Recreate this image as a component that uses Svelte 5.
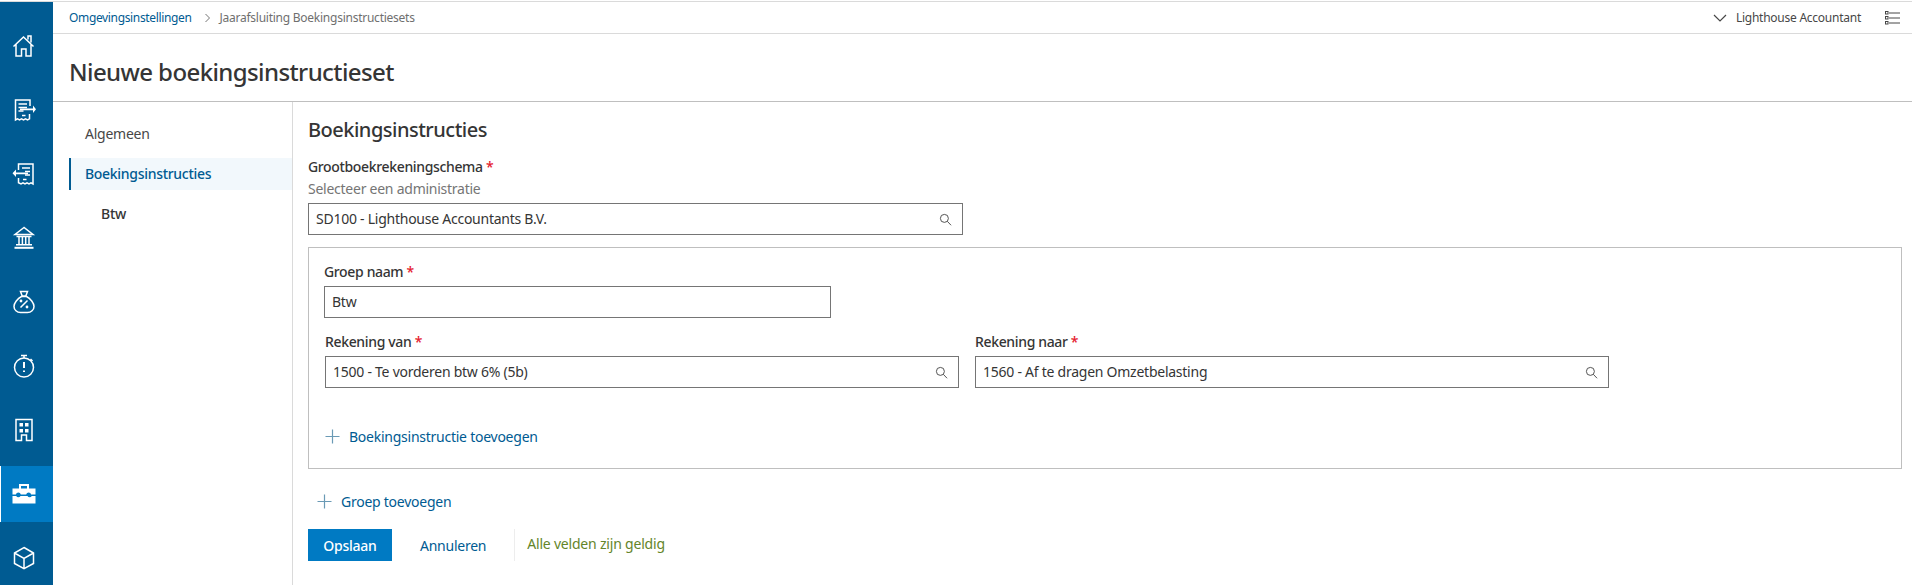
<script>
  const sideItems = [
    { id: 'home', active: false },
    { id: 'out', active: false },
    { id: 'in', active: false },
    { id: 'bank', active: false },
    { id: 'bag', active: false },
    { id: 'timer', active: false },
    { id: 'building', active: false },
    { id: 'case', active: true },
    { id: 'cube', active: false }
  ];
</script>

{#snippet searchIcon()}
  <svg class="search" viewBox="0 0 14 14" aria-hidden="true"><circle cx="5.8" cy="5.8" r="4.3" /><path d="M9 9l4 4.2" /></svg>
{/snippet}

{#snippet plusIcon()}
  <svg class="plus" viewBox="0 0 15 15" aria-hidden="true"><path d="M7.5 0.5v14M0.5 7.5h14" /></svg>
{/snippet}

{#snippet sideIcon(id)}
  <svg class="side-icon" viewBox="0 0 24 24" aria-hidden="true">
    {#if id === 'home'}
      <path d="M1.500 12.500L11.500 3l10 9.500M4 10.500V22h5.500v-7h4.500v7H19V10.500M16 5.500V2h3v6.500" />
    {:else if id === 'out'}
      <path d="M18 8V2H3.500v20l2-1.200 2 1.200 2-1.200 2 1.200 2-1.200 2 1.200 2-1.200V16M6.500 6h8.500M6.500 9.500h8.500M6.500 13h5M10 17.500h3.500" />
      <path class="fill" d="M8 10.500h13V7.500l3 3.800-3 3.700v-2.700H8z" />
    {:else if id === 'in'}
      <path d="M6.500 8V2H21v20l-2-1.200-2 1.200-2-1.200-2 1.200-2-1.200-2 1.200-2.500-1.200V16M10 6h8M13 9.500h5M13 13h5M11 17.500h3.500" />
      <path class="fill" d="M16 10.500H4V7.500L0.500 11.300 4 15v-2.700h12z" />
    {:else if id === 'bank'}
      <path d="M12 1.500L3 8.500h18zM4.500 10.500h15M7 11v7.500M10.400 11v7.500M13.700 11v7.500M17 11v7.500M4 18.700h16" />
      <path class="thick" d="M2.500 21.800h19" />
    {:else if id === 'bag'}
      <path d="M8.500 1.500h7l-1.700 4.500h-3.600zM9.500 6.500h5c4 2 7.500 6.500 7.500 10 0 3.500-3 6-6.500 6h-7c-3.500 0-6.500-2.500-6.500-6 0-3.500 3.500-8 7.500-10zM8.500 17.500l7-7" />
      <circle class="fill" cx="9" cy="11" r="1.400" /><circle class="fill" cx="15" cy="17" r="1.400" />
    {:else if id === 'timer'}
      <circle cx="12" cy="13.500" r="9.500" /><path d="M9 1.500h6M12 2v2M18.500 5l2 2" />
      <path class="thick" d="M12 8v6M12 16.500v1.500" />
    {:else if id === 'building'}
      <path d="M4 1.500h16v21h-5.500V17h-5v5.500H4z" />
      <path class="fill" d="M7.500 5h3.500v3.500H7.500zM13 5h3.500v3.500H13zM7.500 11h3.500v3.500H7.500zM13 11h3.500v3.500H13z" />
    {:else if id === 'case'}
      <path class="thick" d="M8 7V3h8v4" />
      <path class="fill" d="M0.500 6.500h23v6h-4.400a2.500 2.500 0 0 0-4.900 0H8.800a2.500 2.500 0 0 0-4.900 0H0.500zM0.500 14h3.700a2.400 2.400 0 0 0 4.300 0h7a2.400 2.400 0 0 0 4.300 0h3.700v7.500H0.500z" />
    {:else}
      <path d="M12 1.500l9.500 5.500v10.500L12 22.700l-9.500-5.200V7zM2.500 7l9.500 5.500L21.500 7M12 12.500v10.200" />
    {/if}
  </svg>
{/snippet}

<div class="app">
  <nav class="sidebar">
    {#each sideItems as item}
      <div class="side-item" class:active={item.active}>{@render sideIcon(item.id)}</div>
    {/each}
  </nav>

  <div class="main">
    <header class="topbar">
      <div class="crumbs">
        <span class="crumb-link">Omgevingsinstellingen</span>
        <svg class="crumb-sep" viewBox="0 0 8 10" aria-hidden="true"><path d="M1.500 1l4 4-4 4" /></svg>
        <span class="crumb-current">Jaarafsluiting Boekingsinstructiesets</span>
      </div>
      <div class="user">
        <svg class="chevron" viewBox="0 0 14 8" aria-hidden="true"><path d="M1 1l6 6 6-6" /></svg>
        <span class="user-name">Lighthouse Accountant</span>
        <svg class="list-icon" viewBox="0 0 15 14" aria-hidden="true">
          <path class="list-lines" d="M4 2h11M4 7h11M4 12h11" />
          <rect x="0.500" y="0.500" width="2.500" height="2.500" /><rect x="0.500" y="5.500" width="2.500" height="2.500" /><rect x="0.500" y="10.500" width="2.500" height="2.500" />
        </svg>
      </div>
    </header>

    <div class="title-row"><h1>Nieuwe boekingsinstructieset</h1></div>

    <div class="body">
      <aside class="subnav">
        <div class="sub-item">Algemeen</div>
        <div class="sub-item selected">Boekingsinstructies</div>
        <div class="sub-item child">Btw</div>
      </aside>

      <section class="content">
        <h2>Boekingsinstructies</h2>
        <div class="label">Grootboekrekeningschema <span class="req">*</span></div>
        <div class="hint">Selecteer een administratie</div>
        <div class="input schema"><span>SD100 - Lighthouse Accountants B.V.</span>{@render searchIcon()}</div>

        <div class="group">
          <div class="label">Groep naam <span class="req">*</span></div>
          <div class="input name"><span>Btw</span></div>
          <div class="accounts">
            <div class="account">
              <div class="label">Rekening van <span class="req">*</span></div>
              <div class="input"><span>1500 - Te vorderen btw 6% (5b)</span>{@render searchIcon()}</div>
            </div>
            <div class="account">
              <div class="label">Rekening naar <span class="req">*</span></div>
              <div class="input"><span>1560 - Af te dragen Omzetbelasting</span>{@render searchIcon()}</div>
            </div>
          </div>
          <div class="add add-instruction">{@render plusIcon()}<span>Boekingsinstructie toevoegen</span></div>
        </div>

        <div class="add add-group">{@render plusIcon()}<span>Groep toevoegen</span></div>

        <div class="actions">
          <button class="primary" type="button">Opslaan</button>
          <button class="ghost" type="button">Annuleren</button>
          <span class="valid">Alle velden zijn geldig</span>
        </div>
      </section>
    </div>
  </div>
</div>

<style>
  :global(body) {
    margin: 0;
    background: #fff;
    overflow: hidden;
  }
  .app {
    display: flex;
    height: 583px;
    margin-top: 1px;
    border-top: 1px solid #dadada;
    font-family: "Noto Sans", "Open Sans", sans-serif;
    font-size: 14px;
    letter-spacing: -0.25px;
    color: #353535;
  }
  .sidebar {
    flex: 0 0 53px;
    display: flex;
    flex-direction: column;
    gap: 8px;
    padding-top: 16px;
    background: #005b92;
    overflow: hidden;
  }
  .side-item {
    flex: 0 0 56px;
    display: flex;
    align-items: center;
    justify-content: center;
    padding-right: 5px;
  }
  .side-item.active {
    background: #007ac3;
    border-left: 1px solid #fff;
    padding-right: 6px;
  }
  .side-icon {
    width: 24px;
    height: 24px;
    fill: none;
    stroke: #fff;
    stroke-width: 1.500;
  }
  .side-icon .fill {
    fill: #fff;
    stroke: none;
  }
  .side-icon .thick {
    stroke-width: 2;
  }
  .main {
    flex: 1;
    min-width: 0;
    display: flex;
    flex-direction: column;
  }
  .topbar {
    flex: 0 0 31px;
    display: flex;
    align-items: center;
    justify-content: space-between;
    padding: 0 12px 0 16px;
    border-bottom: 1px solid #dadada;
    font-size: 12px;
  }
  .crumbs, .user {
    display: flex;
    align-items: center;
  }
  .crumb-link {
    color: #005b92;
    letter-spacing: -0.35px;
  }
  .crumb-sep {
    width: 8px;
    height: 10px;
    margin: 0 8px 0 12px;
    fill: none;
    stroke: #757575;
  }
  .crumb-current { color: #6f6f6f; }
  .chevron {
    width: 14px;
    height: 8px;
    fill: none;
    stroke: #474747;
    stroke-width: 1.200;
    margin-right: 9px;
  }
  .user-name { color: #474747; }
  .list-icon {
    width: 15px;
    height: 14px;
    margin-left: 24px;
    fill: none;
    stroke: #474747;
  }
  .list-lines { stroke-width: 1; }
  .title-row {
    flex: 0 0 68px;
    display: flex;
    align-items: center;
    padding: 7px 16px 0;
    box-sizing: border-box;
    border-bottom: 1px solid #bfbfbf;
  }
  h1 {
    margin: 0;
    font-size: 24px;
    font-weight: 500;
    letter-spacing: -0.6px;
    color: #353535;
  }
  .body {
    flex: 1;
    display: flex;
    min-height: 0;
  }
  .subnav {
    flex: 0 0 223px;
    padding: 16px 0 0 16px;
    border-right: 1px solid #dadada;
  }
  .sub-item {
    box-sizing: border-box;
    height: 32px;
    margin-bottom: 8px;
    padding: 0 0 2px 16px;
    display: flex;
    align-items: center;
    color: #474747;
  }
  .sub-item.selected {
    padding-left: 14px;
    border-left: 2px solid #005b92;
    background: #f2f8fc;
    color: #005b92;
    font-weight: 500;
    letter-spacing: -0.3px;
  }
  .sub-item.child {
    padding-left: 32px;
    font-weight: 500;
    color: #353535;
  }
  .content {
    flex: 1;
    min-width: 0;
    padding: 16px 10px 0 15px;
  }
  h2 {
    margin: 0 0 15px;
    font-size: 20px;
    font-weight: 500;
    line-height: 24px;
    letter-spacing: -0.5px;
    color: #353535;
  }
  .label {
    font-weight: 500;
    line-height: 20px;
    letter-spacing: -0.35px;
    color: #353535;
  }
  .req { color: #e5202e; }
  .hint {
    margin-top: 2px;
    line-height: 20px;
    color: #757575;
  }
  .input {
    box-sizing: border-box;
    height: 32px;
    margin-top: 4px;
    padding: 0 10px 0 7px;
    display: flex;
    align-items: center;
    justify-content: space-between;
    border: 1px solid #757575;
    background: #fff;
    color: #353535;
  }
  .input span { padding-bottom: 2px; }
  .input.schema { width: 655px; }
  .input.name { width: 507px; }
  .search {
    flex: none;
    width: 13px;
    height: 13px;
    fill: none;
    stroke: #474747;
    stroke-width: 1;
  }
  .group {
    box-sizing: border-box;
    height: 222px;
    margin-top: 12px;
    padding: 14px 15px 0;
    border: 1px solid #bfbfbf;
  }
  .accounts {
    display: flex;
    gap: 16px;
    margin-top: 14px;
    padding-left: 1px;
  }
  .account { width: 634px; }
  .add {
    display: flex;
    align-items: center;
    gap: 9px;
    color: #005b92;
  }
  .add-instruction {
    margin: 38px 0 0 1px;
    height: 20px;
  }
  .add-group {
    margin: 22px 0 0 9px;
    height: 20px;
  }
  .plus {
    width: 15px;
    height: 15px;
    fill: none;
    stroke: #6a9ab5;
    stroke-width: 1.200;
  }
  .actions {
    display: flex;
    align-items: center;
    margin-top: 18px;
  }
  button {
    font: inherit;
    letter-spacing: inherit;
    height: 32px;
    border: none;
    cursor: pointer;
  }
  .primary {
    width: 84px;
    background: #007ac3;
    color: #fff;
    font-weight: 500;
  }
  .ghost {
    padding: 0 28px;
    background: none;
    color: #005b92;
  }
  .valid {
    height: 32px;
    line-height: 29px;
    padding-left: 12px;
    border-left: 1px solid #ededed;
    letter-spacing: -0.2px;
    color: #64852a;
  }
</style>
